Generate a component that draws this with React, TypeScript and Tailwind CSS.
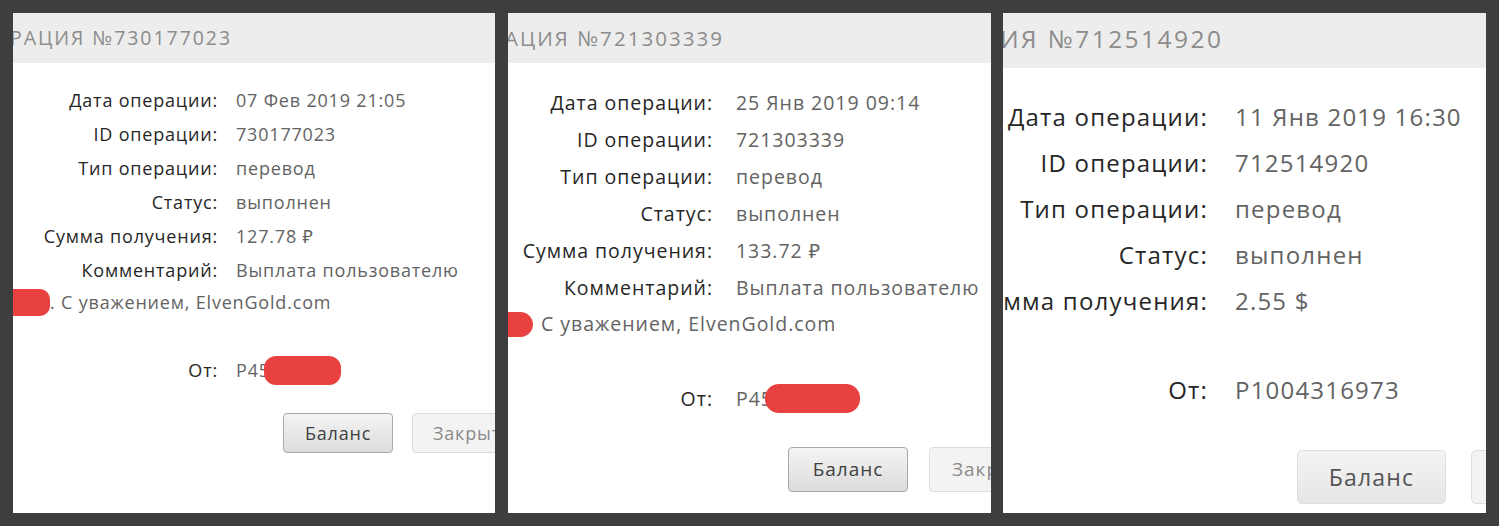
const font = { fontFamily: '"Open Sans", "Noto Sans", sans-serif' };

type Row = { label: string; value: string };

const rows1: Row[] = [
  { label: "Дата операции:", value: "07 Фев 2019 21:05" },
  { label: "ID операции:", value: "730177023" },
  { label: "Тип операции:", value: "перевод" },
  { label: "Статус:", value: "выполнен" },
  { label: "Сумма получения:", value: "127.78 ₽" },
  { label: "Комментарий:", value: "Выплата пользователю" },
];

const rows2: Row[] = [
  { label: "Дата операции:", value: "25 Янв 2019 09:14" },
  { label: "ID операции:", value: "721303339" },
  { label: "Тип операции:", value: "перевод" },
  { label: "Статус:", value: "выполнен" },
  { label: "Сумма получения:", value: "133.72 ₽" },
  { label: "Комментарий:", value: "Выплата пользователю" },
];

const rows3: Row[] = [
  { label: "Дата операции:", value: "11 Янв 2019 16:30" },
  { label: "ID операции:", value: "712514920" },
  { label: "Тип операции:", value: "перевод" },
  { label: "Статус:", value: "выполнен" },
  { label: "Сумма получения:", value: "2.55 $" },
];

function PanelOne() {
  return (
    <section className="w-[482px] h-[500px] bg-white overflow-hidden flex flex-col shrink-0">
      <header className="h-[50px] bg-[#ededed] flex items-center">
        <span className="ml-[-3px] text-[19.5px] tracking-[0.1em] text-[#8c8c8c] whitespace-nowrap">
          РАЦИЯ №730177023
        </span>
      </header>
      <div className="pt-[20px] flex flex-col text-[18px] tracking-[0.045em]">
        {rows1.map((r) => (
          <div key={r.label} className="h-[34px] flex items-center whitespace-nowrap">
            <span className="w-[205px] shrink-0 text-right text-[#262626]">{r.label}</span>
            <span className="ml-[18px] text-[#636363]">{r.value}</span>
          </div>
        ))}
        <div className="h-[30px] flex items-center whitespace-nowrap">
          <span className="w-[37px] h-[27px] rounded-r-[10px] bg-[#e8413f] shrink-0" />
          <span className="text-[#636363]">. С уважением, ElvenGold.com</span>
        </div>
        <div className="mt-[36px] h-[34px] flex items-center whitespace-nowrap">
          <span className="w-[205px] shrink-0 text-right text-[#262626]">От:</span>
          <span className="ml-[18px] text-[#636363]">P45</span>
          {/* redaction scribble */}
          <span className="ml-[-6px] w-[77px] h-[29px] rounded-[12px] bg-[#e8413f] shrink-0" />
        </div>
        <div className="mt-[26px] pl-[270px] flex gap-[19px]">
          <button className="w-[110px] h-[40px] shrink-0 rounded-[4px] border border-[#a9a9a9] bg-gradient-to-b from-[#f4f4f4] to-[#dcdcdc] text-[18px] text-[#3f3f3f]">
            Баланс
          </button>
          <button className="w-[110px] h-[40px] shrink-0 rounded-[4px] border border-[#dddddd] bg-[#f3f3f3] text-[18px] text-[#8a8a8a] text-left pl-[20px]">
            Закрыть
          </button>
        </div>
      </div>
    </section>
  );
}

function PanelTwo() {
  return (
    <section className="w-[483px] h-[500px] bg-white overflow-hidden flex flex-col shrink-0">
      <header className="h-[50px] bg-[#ededed] flex items-center">
        <span className="ml-[-3px] text-[20.5px] tracking-[0.1em] text-[#8c8c8c] whitespace-nowrap">
          АЦИЯ №721303339
        </span>
      </header>
      <div className="pt-[21px] flex flex-col text-[19.5px] tracking-[0.05em]">
        {rows2.map((r) => (
          <div key={r.label} className="h-[37px] flex items-center whitespace-nowrap">
            <span className="w-[205px] shrink-0 text-right text-[#262626]">{r.label}</span>
            <span className="ml-[23px] text-[#636363]">{r.value}</span>
          </div>
        ))}
        <div className="h-[36px] flex items-center whitespace-nowrap">
          <span className="w-[25px] h-[25px] rounded-r-full bg-[#e8413f] shrink-0" />
          <span className="ml-[8px] text-[#636363]">С уважением, ElvenGold.com</span>
        </div>
        <div className="mt-[38px] h-[37px] flex items-center whitespace-nowrap">
          <span className="w-[205px] shrink-0 text-right text-[#262626]">От:</span>
          <span className="ml-[23px] text-[#636363]">P45</span>
          <span className="ml-[-8px] w-[95px] h-[29px] rounded-[14px] bg-[#e8413f] shrink-0" />
        </div>
        <div className="mt-[30px] pl-[280px] flex gap-[21px]">
          <button className="w-[120px] h-[45px] shrink-0 rounded-[4px] border border-[#a9a9a9] bg-gradient-to-b from-[#f4f4f4] to-[#dcdcdc] text-[19px] text-[#3f3f3f]">
            Баланс
          </button>
          <button className="w-[120px] h-[45px] shrink-0 rounded-[4px] border border-[#dddddd] bg-[#f3f3f3] text-[19px] text-[#8a8a8a] text-left pl-[22px]">
            Закрыть
          </button>
        </div>
      </div>
    </section>
  );
}

function PanelThree() {
  return (
    <section className="w-[483px] h-[500px] bg-white overflow-hidden flex flex-col shrink-0">
      <header className="h-[55px] bg-[#ededed] flex items-start pt-[8px]">
        <span className="ml-[-3px] text-[24.5px] tracking-[0.1em] text-[#8c8c8c] whitespace-nowrap">
          ИЯ №712514920
        </span>
      </header>
      <div className="pt-[26px] flex flex-col text-[24px] tracking-[0.05em]">
        {rows3.map((r) => (
          <div key={r.label} className="h-[46px] flex items-center whitespace-nowrap">
            <span className="w-[205px] shrink-0 flex justify-end text-[#262626]">{r.label}</span>
            <span className="ml-[27px] text-[#636363]">{r.value}</span>
          </div>
        ))}
        <div className="mt-[43px] h-[46px] flex items-center whitespace-nowrap">
          <span className="w-[205px] shrink-0 text-right text-[#262626]">От:</span>
          <span className="ml-[27px] text-[#636363]">P1004316973</span>
        </div>
        <div className="mt-[37px] pl-[294px] flex gap-[25px]">
          <button className="w-[149px] h-[54px] shrink-0 rounded-[5px] border border-[#dddddd] bg-gradient-to-b from-[#f4f4f4] to-[#e6e6e6] text-[23px] text-[#555555]">
            Баланс
          </button>
          <button className="w-[149px] h-[54px] shrink-0 rounded-[5px] border border-[#dddddd] bg-[#f3f3f3]" />
        </div>
      </div>
    </section>
  );
}

export default function App() {
  return (
    <div className="w-[1499px] h-[526px] bg-[#3e3e3e] flex p-[13px]" style={font}>
      <PanelOne />
      <div className="w-[13px] shrink-0" />
      <PanelTwo />
      <div className="w-[12px] shrink-0" />
      <PanelThree />
    </div>
  );
}
